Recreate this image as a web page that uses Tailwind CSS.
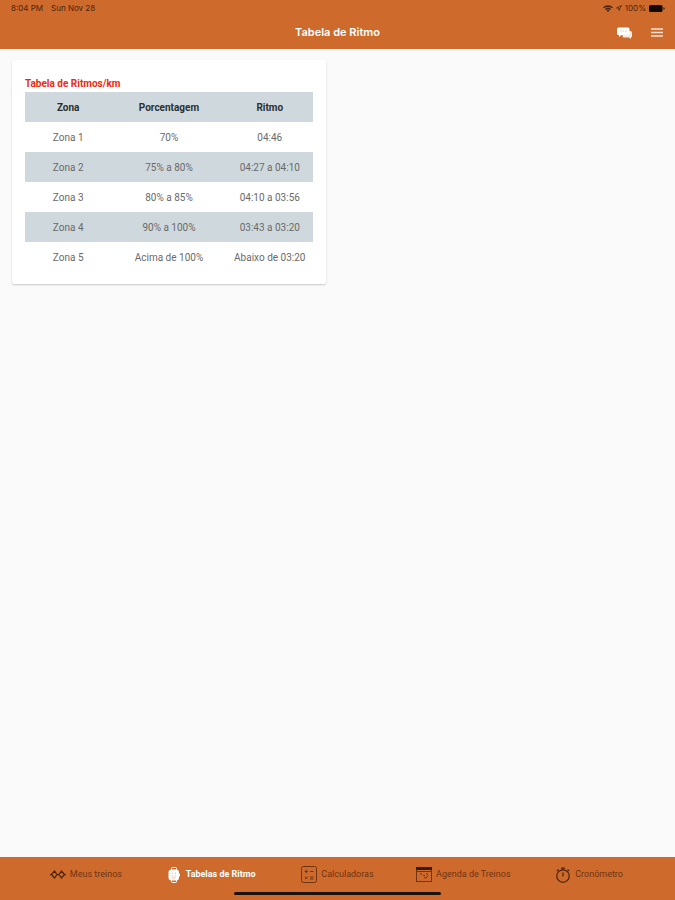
<!DOCTYPE html>
<html lang="pt-BR">
<head>
  <meta charset="UTF-8" />
  <meta name="viewport" content="width=device-width, initial-scale=1.0" />
  <title>Tabela de Ritmo</title>
  <script src="https://cdn.jsdelivr.net/npm/@tailwindcss/browser@4"></script>
</head>
<body class="min-h-screen flex flex-col bg-[#fafafa] font-[Roboto,sans-serif]">

  <header class="bg-[#ce6b2c]">
    <!-- Status bar -->
    <div class="h-4 pl-[11px] pr-[10px] flex items-center justify-between font-[Inter,sans-serif] text-[8px] text-[#4a230c]">
      <div class="flex gap-2">
        <span>8:04 PM</span>
        <span>Sun Nov 28</span>
      </div>
      <div class="flex items-center gap-[3px]">
        <svg class="w-[10px] h-[7px]" viewBox="0 0 20 14" fill="none" stroke="currentColor" stroke-width="3">
          <path d="M1 5.5a13 13 0 0 1 18 0M5 9a7.5 7.5 0 0 1 10 0" />
          <path d="M10 14l-3-3a4 4 0 0 1 6 0z" fill="currentColor" stroke="none" />
        </svg>
        <svg class="w-[6px] h-[6px]" viewBox="0 0 12 12" fill="none" stroke="currentColor" stroke-width="1.5">
          <path d="M11 1L1 6h5v5z" />
        </svg>
        <span>100%</span>
        <svg class="w-4 h-[7px]" viewBox="0 0 32 14" fill="#120804">
          <rect x="0" y="0" width="27" height="14" rx="3" />
          <path d="M29 4.5c3 .5 3 4.5 0 5z" />
        </svg>
      </div>
    </div>

    <!-- Toolbar -->
    <div class="h-[33px] px-3 grid grid-cols-3 items-center text-white">
      <h1 class="col-start-2 text-center font-[Inter,sans-serif] text-[11px] font-semibold">Tabela de Ritmo</h1>
      <div class="flex justify-end items-center gap-[19px]">
        <button type="button" aria-label="Mensagens">
          <svg class="block w-[15px] h-3" viewBox="0 0 30 24">
            <path d="M12 8h15a3 3 0 0 1 3 3v7a3 3 0 0 1-2 3v3l-4-3H14a3 3 0 0 1-3-3z" fill="#fff" fill-opacity=".85" />
            <path d="M3 1h19a3 3 0 0 1 3 3v9a3 3 0 0 1-3 3H9l-5 4v-4H3a3 3 0 0 1-3-3V4a3 3 0 0 1 3-3z" fill="#fff" />
            <path d="M6 8h3M11 8h3M16 8h3" stroke="#ce6b2c" stroke-opacity=".4" stroke-width="2" />
          </svg>
        </button>
        <button type="button" aria-label="Menu">
          <svg class="block w-3 h-[9px]" viewBox="0 0 12 9" stroke="#fff" stroke-opacity=".8" stroke-width="1.5">
            <path d="M0 1h12M0 4.5h12M0 8h12" />
          </svg>
        </button>
      </div>
    </div>
  </header>

  <main class="flex-1 px-3 pt-[11px]">
    <div class="w-[47%] min-w-[314px] min-h-[224px] max-w-xl px-[13px] pt-[15px] pb-3 bg-white rounded-xs shadow-[0_1px_2px_rgba(0,0,0,0.2)]">
      <table class="w-full table-fixed text-center text-[10px] text-[#6a6a6a]">
        <caption class="text-left text-[10px] leading-[17px] font-bold text-[#f0280f]">Tabela de Ritmos/km</caption>
        <thead class="text-[#2b3032]">
          <tr class="h-[30px] bg-[#cfd8dc]">
            <th class="w-[30%]">Zona</th>
            <th class="w-[40%]">Porcentagem</th>
            <th class="w-[30%]">Ritmo</th>
          </tr>
        </thead>
        <tbody>
          <tr class="h-[30px]">
            <td>Zona 1</td>
            <td>70%</td>
            <td>04:46</td>
          </tr>
          <tr class="h-[30px] bg-[#cfd8dc]">
            <td>Zona 2</td>
            <td>75% a 80%</td>
            <td>04:27 a 04:10</td>
          </tr>
          <tr class="h-[30px]">
            <td>Zona 3</td>
            <td>80% a 85%</td>
            <td>04:10 a 03:56</td>
          </tr>
          <tr class="h-[30px] bg-[#cfd8dc]">
            <td>Zona 4</td>
            <td>90% a 100%</td>
            <td>03:43 a 03:20</td>
          </tr>
          <tr class="h-[30px]">
            <td>Zona 5</td>
            <td>Acima de 100%</td>
            <td>Abaixo de 03:20</td>
          </tr>
        </tbody>
      </table>
    </div>
  </main>

  <footer class="bg-[#ce6b2c]">
    <nav class="h-[35px] px-[23px] flex text-[9px] text-[#6e3413]">
      <a href="#" class="flex-1 flex items-center justify-center gap-1">
        <svg class="w-4 h-[9px]" viewBox="0 0 32 18" fill="none" stroke="#4f240c" stroke-width="2.5">
          <path d="M0 9h4M28 9h4M13 9h6M9 2L3 9l6 7 5-7zM23 2l-5 7 5 7 6-7z" />
        </svg>
        Meus treinos
      </a>
      <a href="#" aria-current="page" class="flex-1 flex items-center justify-center gap-1.5 font-bold text-white">
        <svg class="w-3 h-4" viewBox="0 0 24 32">
          <path d="M7 6V3a2 2 0 0 1 2-2h6a2 2 0 0 1 2 2v3M7 26v3a2 2 0 0 0 2 2h6a2 2 0 0 0 2-2v-3" fill="none" stroke="#fff" stroke-width="2" />
          <rect x="1" y="5" width="21" height="22" rx="6" fill="#fff" />
          <rect x="21" y="13" width="3" height="6" rx="1" fill="#fff" />
          <path d="M8 11v3M15 11v3M7 18h3M13 18h3M8 22h7" stroke="#ce6b2c" stroke-opacity=".6" stroke-width="1.5" />
        </svg>
        Tabelas de Ritmo
      </a>
      <a href="#" class="flex-1 flex items-center justify-center gap-1">
        <svg class="w-4 h-[17px]" viewBox="0 0 32 34" fill="none" stroke="currentColor" stroke-width="2">
          <rect x="1" y="1" width="30" height="32" rx="4" />
          <path d="M7 11h7M10.5 7.5v7M18 11h7M8 21l5 5M13 21l-5 5M18 22h7M18 26h7" />
        </svg>
        Calculadoras
      </a>
      <a href="#" class="flex-1 flex items-center justify-center gap-1">
        <svg class="w-4 h-[15px]" viewBox="0 0 32 30" fill="none" stroke="currentColor" stroke-width="2">
          <rect x="1" y="1" width="30" height="28" />
          <path d="M0 3h32" stroke="#3d1a08" stroke-width="6" />
          <path d="M1 9h30M8 14h4M14 17h4M20 14h4M16 20l3 3 5-6" />
        </svg>
        Agenda de Treinos
      </a>
      <a href="#" class="flex-1 flex items-center justify-center gap-1">
        <svg class="w-4 h-4" viewBox="0 0 32 32" fill="none" stroke="#4f240c" stroke-width="2.5">
          <circle cx="16" cy="18" r="12.5" />
          <path d="M12 2h8M16 2v4M16 11v8M4 8l3-3M28 8l-3-3" />
        </svg>
        Cronômetro
      </a>
    </nav>
    <!-- Home indicator -->
    <div class="h-2 flex justify-center">
      <div class="w-[207px] h-[3px] rounded-full bg-[#1c120c]"></div>
    </div>
  </footer>

</body>
</html>
